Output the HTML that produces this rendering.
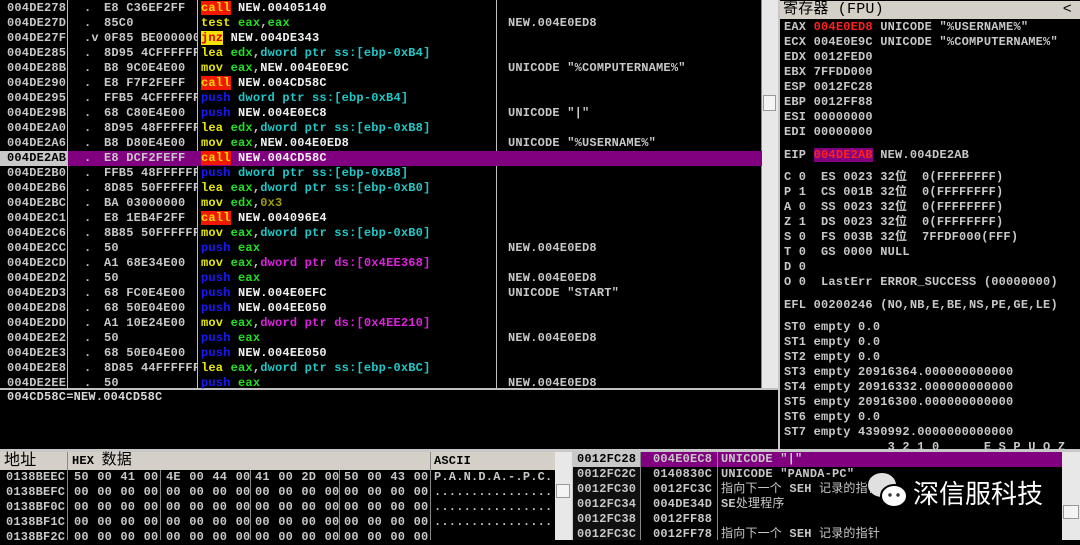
<!DOCTYPE html><html><head><meta charset="utf-8"><style>
*{margin:0;padding:0;box-sizing:border-box}
body{width:1080px;height:540px;background:#000;position:relative;overflow:hidden;font:bold 12px/15px "Liberation Mono","Noto Sans CJK SC",monospace;color:#c8c8c8;letter-spacing:0.2px}
.a{position:absolute;white-space:pre}
.p{position:absolute}
.y{color:#e8e800}.g{color:#20e020}.c{color:#20c8c8}.b{color:#1818ff}.w{color:#f0f0f0}.m{color:#e020e0}.o{color:#a0a000}
.call{background:#f01800;color:#ffd800}.jnz{background:#f8e000;color:#e00000}
.hdr{background:#d4d0c8;color:#000;font-family:"Liberation Mono","Noto Sans CJK SC",monospace}
</style></head><body>
<div class="p" style="left:0;top:0;width:762px;height:389px;border-right:1px solid #888"></div>
<div class="p" style="left:67px;top:0;width:1px;height:389px;background:#c0c0c0"></div>
<div class="p" style="left:197px;top:0;width:1px;height:389px;background:#c0c0c0"></div>
<div class="p" style="left:496px;top:0;width:1px;height:389px;background:#c0c0c0"></div>
<div class="p" style="left:762px;top:0;width:16px;height:389px;background:#e8e8e8"></div>
<div class="p" style="left:763px;top:95px;width:13px;height:16px;background:#f4f4f4;border:1px solid #999"></div>
<div class="p" style="left:0;top:151px;width:67px;height:15px;background:#c8c8c8"></div>
<div class="p" style="left:68px;top:151px;width:694px;height:15px;background:#800080"></div>
<div class="p" style="left:0;top:388px;width:778px;height:2px;background:#c0c0c0"></div>
<div id="d"></div>
<div class="a w" style="left:7px;top:390px;color:#d8d8d8">004CD58C=NEW.004CD58C</div>
<div class="p" style="left:0;top:449px;width:1080px;height:3px;background:#c8c8c8"></div>
<div class="p" style="left:778px;top:0;width:2px;height:452px;background:#c8c8c8"></div>
<div class="p hdr" style="left:780px;top:1px;width:300px;height:18px;font-size:15px;line-height:18px;font-weight:normal;padding-left:3px">寄存器 (FPU)<span style="position:absolute;right:8px">&lt;</span></div>
<div id="r"></div>
<div class="p hdr" style="left:0;top:452px;width:555px;height:18px;font-size:13px;line-height:18px"></div>
<div class="a" style="left:4px;top:452px;color:#000;font-size:16px;line-height:18px;font-weight:normal">地址</div>
<div class="a" style="left:72px;top:452px;color:#000;line-height:18px">HEX <span style="font-size:15px;font-weight:normal">数据</span></div>
<div class="a" style="left:434px;top:452px;color:#000;line-height:18px">ASCII</div>
<div class="p" style="left:67px;top:452px;width:1px;height:88px;background:#888"></div>
<div class="p" style="left:430px;top:452px;width:1px;height:88px;background:#888"></div>
<div class="p" style="left:160px;top:470px;width:1px;height:70px;background:#888"></div>
<div class="p" style="left:250px;top:470px;width:1px;height:70px;background:#888"></div>
<div class="p" style="left:339px;top:470px;width:1px;height:70px;background:#888"></div>
<div class="p" style="left:555px;top:452px;width:17px;height:88px;background:#e8e8e8"></div>
<div class="p" style="left:556px;top:484px;width:14px;height:14px;background:#f4f4f4;border:1px solid #999"></div>
<div id="du"></div>
<div class="p" style="left:572px;top:452px;width:1px;height:88px;background:#c8c8c8"></div>
<div class="p" style="left:573px;top:452px;width:67px;height:88px;background:#101010"></div>
<div class="p" style="left:573px;top:452px;width:67px;height:15px;background:#c8c8c8"></div>
<div class="p" style="left:640px;top:452px;width:422px;height:15px;background:#800080"></div>
<div class="p" style="left:640px;top:452px;width:1px;height:88px;background:#888"></div>
<div class="p" style="left:717px;top:452px;width:1px;height:88px;background:#888"></div>
<div class="p" style="left:1062px;top:452px;width:18px;height:88px;background:#e8e8e8"></div>
<div class="p" style="left:1063px;top:505px;width:16px;height:14px;background:#f4f4f4;border:1px solid #999"></div>
<div id="st"></div>
<svg class="p" style="left:866px;top:471px" width="44" height="40" viewBox="0 0 44 40"><ellipse cx="16" cy="14" rx="14" ry="12" fill="#e0e0e0"/><ellipse cx="28" cy="25" rx="13" ry="11" fill="#fff" stroke="#000" stroke-width="2"/><circle cx="24" cy="24" r="1.7" fill="#333"/><circle cx="32" cy="24" r="1.7" fill="#333"/></svg>
<div class="a" style="left:913px;top:476px;font:26px/34px 'Noto Sans CJK SC',sans-serif;color:#fff;letter-spacing:0">深信服科技</div>
<script>
function add(id,h){document.getElementById(id).insertAdjacentHTML('beforeend',h)}
var rows=[
['004DE278','.','E8 C36EF2FF','<span class="call">call</span> <span class="w">NEW.00405140</span>',''],
['004DE27D','.','85C0','<span class="y">test</span> <span class="g">eax</span>,<span class="g">eax</span>','NEW.004E0ED8'],
['004DE27F','.v','0F85 BE000000','<span class="jnz">jnz</span> <span class="w">NEW.004DE343</span>',''],
['004DE285','.','8D95 4CFFFFFF','<span class="y">lea</span> <span class="g">edx</span>,<span class="c">dword ptr ss:[ebp-0xB4]</span>',''],
['004DE28B','.','B8 9C0E4E00','<span class="y">mov</span> <span class="g">eax</span>,<span class="w">NEW.004E0E9C</span>','UNICODE "%COMPUTERNAME%"'],
['004DE290','.','E8 F7F2FEFF','<span class="call">call</span> <span class="w">NEW.004CD58C</span>',''],
['004DE295','.','FFB5 4CFFFFFF','<span class="b">push</span> <span class="c">dword ptr ss:[ebp-0xB4]</span>',''],
['004DE29B','.','68 C80E4E00','<span class="b">push</span> <span class="w">NEW.004E0EC8</span>','UNICODE "|"'],
['004DE2A0','.','8D95 48FFFFFF','<span class="y">lea</span> <span class="g">edx</span>,<span class="c">dword ptr ss:[ebp-0xB8]</span>',''],
['004DE2A6','.','B8 D80E4E00','<span class="y">mov</span> <span class="g">eax</span>,<span class="w">NEW.004E0ED8</span>','UNICODE "%USERNAME%"'],
['004DE2AB','.','E8 DCF2FEFF','<span class="call">call</span> <span class="w">NEW.004CD58C</span>',''],
['004DE2B0','.','FFB5 48FFFFFF','<span class="b">push</span> <span class="c">dword ptr ss:[ebp-0xB8]</span>',''],
['004DE2B6','.','8D85 50FFFFFF','<span class="y">lea</span> <span class="g">eax</span>,<span class="c">dword ptr ss:[ebp-0xB0]</span>',''],
['004DE2BC','.','BA 03000000','<span class="y">mov</span> <span class="g">edx</span>,<span class="o">0x3</span>',''],
['004DE2C1','.','E8 1EB4F2FF','<span class="call">call</span> <span class="w">NEW.004096E4</span>',''],
['004DE2C6','.','8B85 50FFFFFF','<span class="y">mov</span> <span class="g">eax</span>,<span class="c">dword ptr ss:[ebp-0xB0]</span>',''],
['004DE2CC','.','50','<span class="b">push</span> <span class="g">eax</span>','NEW.004E0ED8'],
['004DE2CD','.','A1 68E34E00','<span class="y">mov</span> <span class="g">eax</span>,<span class="m">dword ptr ds:[0x4EE368]</span>',''],
['004DE2D2','.','50','<span class="b">push</span> <span class="g">eax</span>','NEW.004E0ED8'],
['004DE2D3','.','68 FC0E4E00','<span class="b">push</span> <span class="w">NEW.004E0EFC</span>','UNICODE "START"'],
['004DE2D8','.','68 50E04E00','<span class="b">push</span> <span class="w">NEW.004EE050</span>',''],
['004DE2DD','.','A1 10E24E00','<span class="y">mov</span> <span class="g">eax</span>,<span class="m">dword ptr ds:[0x4EE210]</span>',''],
['004DE2E2','.','50','<span class="b">push</span> <span class="g">eax</span>','NEW.004E0ED8'],
['004DE2E3','.','68 50E04E00','<span class="b">push</span> <span class="w">NEW.004EE050</span>',''],
['004DE2E8','.','8D85 44FFFFFF','<span class="y">lea</span> <span class="g">eax</span>,<span class="c">dword ptr ss:[ebp-0xBC]</span>',''],
['004DE2EE','.','50','<span class="b">push</span> <span class="g">eax</span>','NEW.004E0ED8']];
var h='';
rows.forEach(function(r,i){var t=1+15*i;var ac=i==10?'color:#000':'color:#c8c8c8';
h+='<div class="a" style="left:7px;top:'+t+'px;'+ac+'">'+r[0]+'</div>';
h+='<div class="a" style="left:84px;top:'+t+'px">'+r[1]+'</div>';
h+='<div class="a" style="left:104px;top:'+t+'px;width:93px;overflow:hidden">'+r[2]+'</div>';
h+='<div class="a" style="left:201px;top:'+t+'px;width:294px;overflow:hidden">'+r[3]+'</div>';
h+='<div class="a" style="left:508px;top:'+t+'px">'+r[4]+'</div>';});
add('d',h);
var R=[[20,'EAX <span style="color:#ff2020">004E0ED8</span> UNICODE "%USERNAME%"'],[35,'ECX 004E0E9C UNICODE "%COMPUTERNAME%"'],[50,'EDX 0012FED0'],[65,'EBX 7FFDD000'],[80,'ESP 0012FC28'],[95,'EBP 0012FF88'],[110,'ESI 00000000'],[125,'EDI 00000000'],
[148,'EIP <span style="background:#800080;color:#ff2020">004DE2AB</span> NEW.004DE2AB'],
[170,'C 0  ES 0023 32位  0(FFFFFFFF)'],[185,'P 1  CS 001B 32位  0(FFFFFFFF)'],[200,'A 0  SS 0023 32位  0(FFFFFFFF)'],[215,'Z 1  DS 0023 32位  0(FFFFFFFF)'],[230,'S 0  FS 003B 32位  7FFDF000(FFF)'],[245,'T 0  GS 0000 NULL'],[260,'D 0'],[275,'O 0  LastErr ERROR_SUCCESS (00000000)'],
[298,'EFL 00200246 (NO,NB,E,BE,NS,PE,GE,LE)'],
[320,'ST0 empty 0.0'],[335,'ST1 empty 0.0'],[350,'ST2 empty 0.0'],[365,'ST3 empty 20916364.000000000000'],[380,'ST4 empty 20916332.000000000000'],[395,'ST5 empty 20916300.000000000000'],[410,'ST6 empty 0.0'],[425,'ST7 empty 4390992.0000000000000'],[440,'              3 2 1 0      E S P U O Z']];
h='';R.forEach(function(r){h+='<div class="a" style="left:784px;top:'+r[0]+'px;width:296px;overflow:hidden;height:'+(r[0]==440?10:15)+'px">'+r[1]+'</div>'});add('r',h);
var first=['50','00','41','00','4E','00','44','00','41','00','2D','00','50','00','43','00'];
var starts=[74,166,255,344];
h='';for(var i=0;i<5;i++){var t=470+15*i;
h+='<div class="a" style="left:6px;top:'+t+'px">'+['0138BEEC','0138BEFC','0138BF0C','0138BF1C','0138BF2C'][i]+'</div>';
for(var k=0;k<16;k++){var x=starts[k>>2]+23.2*(k&3);h+='<div class="a" style="left:'+x+'px;top:'+t+'px">'+(i==0?first[k]:'00')+'</div>';}
if(i<4)h+='<div class="a" style="left:434px;top:'+t+'px">'+(i==0?'P.A.N.D.A.-.P.C.':'................')+'</div>';}
add('du',h);
var S=[['0012FC28','004E0EC8','UNICODE "|"'],['0012FC2C','0140830C','UNICODE "PANDA-PC"'],['0012FC30','0012FC3C','<span style="font-weight:normal">指向下一个</span> SEH <span style="font-weight:normal">记录的指针</span>'],['0012FC34','004DE34D','SE<span style="font-weight:normal">处理程序</span>'],['0012FC38','0012FF88',''],['0012FC3C','0012FF78','<span style="font-weight:normal">指向下一个</span> SEH <span style="font-weight:normal">记录的指针</span>']];
h='';S.forEach(function(r,i){var t=452+15*i;h+='<div class="a" style="left:577px;top:'+t+'px;'+(i==0?'color:#000':'')+'">'+r[0]+'</div><div class="a" style="left:653px;top:'+t+'px">'+r[1]+'</div><div class="a" style="left:721px;top:'+t+'px">'+r[2]+'</div>'});add('st',h);
</script>
</body></html>
